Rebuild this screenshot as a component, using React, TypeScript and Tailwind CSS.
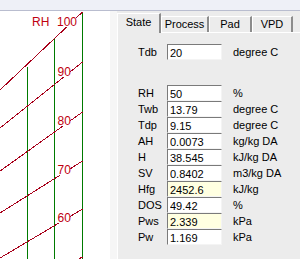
import React from "react";

type Row = { label: string; value: string; unit: string; hint?: boolean };

const rows: Row[] = [
	{ label: "RH", value: "50", unit: "%" },
	{ label: "Twb", value: "13.79", unit: "degree C" },
	{ label: "Tdp", value: "9.15", unit: "degree C" },
	{ label: "AH", value: "0.0073", unit: "kg/kg DA" },
	{ label: "H", value: "38.545", unit: "kJ/kg DA" },
	{ label: "SV", value: "0.8402", unit: "m3/kg DA" },
	{ label: "Hfg", value: "2452.6", unit: "kJ/kg", hint: true },
	{ label: "DOS", value: "49.42", unit: "%" },
	{ label: "Pws", value: "2.339", unit: "kPa", hint: true },
	{ label: "Pw", value: "1.169", unit: "kPa" },
];

const tabs = [
	{ name: "State", w: "w-[44px]" },
	{ name: "Process", w: "w-[48px]" },
	{ name: "Pad", w: "w-[43px]" },
	{ name: "VPD", w: "w-[41px]" },
];

// RH lines: [y at x=82, y at x=0]
const rhLines = [
	[12, 90],
	[62, 128],
	[112, 171],
	[161, 213],
	[209, 258],
	[257, 300],
];

const rhLabels = [
	{ t: "90", y: 76 },
	{ t: "80", y: 125 },
	{ t: "70", y: 174 },
	{ t: "60", y: 222 },
];

function Chart() {
	return (
		<div className="w-[110px] h-full bg-white">
			<svg width="110" height="248" viewBox="0 11 110 248">
				<g stroke="#007a00" strokeWidth="1" shapeRendering="crispEdges">
					<line x1="27.5" y1="67" x2="27.5" y2="259" />
					<line x1="54.5" y1="39" x2="54.5" y2="259" />
					<line x1="82.5" y1="12" x2="82.5" y2="259" />
				</g>
				<g stroke="#a8001a" strokeWidth="1" shapeRendering="crispEdges">
					{rhLines.map(([a, b], i) => (
						<line key={i} x1="82.5" y1={a} x2="0" y2={b} />
					))}
				</g>
				<g fill="#c0000f" fontFamily="'Liberation Sans', Arial, sans-serif" fontSize="12">
					<text x="32" y="26">RH</text>
					<rect x="57" y="16" width="19" height="11" fill="#ffffff" />
					<text x="57" y="26">100</text>
					{rhLabels.map((l) => (
						<g key={l.t}>
							<rect x="57" y={l.y - 10} width="13" height="11" fill="#ffffff" />
							<text x="57.5" y={l.y}>
								{l.t}
							</text>
						</g>
					))}
				</g>
			</svg>
		</div>
	);
}

function Field({ value, hint }: { value: string; hint?: boolean }) {
	return (
		<input
			readOnly
			value={value}
			className={`w-[55px] h-[16px] px-[2px] pt-[2px] text-[11px] leading-none outline-none border border-t-[#7a7a7a] border-l-[#7a7a7a] border-b-[#f4f4f4] border-r-[#f4f4f4] ${
				hint ? "bg-[#ffffe1]" : "bg-white"
			}`}
		/>
	);
}

export default function App() {
	return (
		<div className="w-[300px] h-[259px] overflow-hidden font-['Liberation_Sans',Arial,sans-serif] text-[11px] text-black">
			<div className="h-[11px] bg-[#eef0f7] border-b border-[#b9bdcf]" />
			<div className="flex h-[248px]">
				<Chart />
				<div className="w-[7px] bg-[#f6f6f6]" />
				<div className="flex-1 flex flex-col bg-[#ececec] pt-[2px]">
					<div className="flex items-end h-[19px]">
						{tabs.map((t, i) =>
							i === 0 ? (
								<div
									key={t.name}
									className={`${t.w} h-[20px] -mb-px relative z-10 flex items-center justify-center bg-[#ececec] border-l border-t border-white border-r-2 border-r-[#8c8c8c] pb-[2px]`}
								>
									{t.name}
								</div>
							) : (
								<div
									key={t.name}
									className={`${t.w} h-[16px] flex items-center justify-center border-l border-t border-white border-r-2 border-r-[#8c8c8c]`}
								>
									{t.name}
								</div>
							)
						)}
					</div>
					<div className="flex-1 border-t border-l border-white pl-[20px] pt-[11px]">
						<div className="flex items-center h-[16px]">
							<span className="w-[29px]">Tdb</span>
							<Field value="20" />
							<span className="ml-[11px]">degree C</span>
						</div>
						<div className="mt-[25px] flex flex-col">
							{rows.map((r) => (
								<div key={r.label} className="flex items-center h-[16px]">
									<span className="w-[29px]">{r.label}</span>
									<Field value={r.value} hint={r.hint} />
									<span className="ml-[11px]">{r.unit}</span>
								</div>
							))}
						</div>
					</div>
				</div>
			</div>
		</div>
	);
}
